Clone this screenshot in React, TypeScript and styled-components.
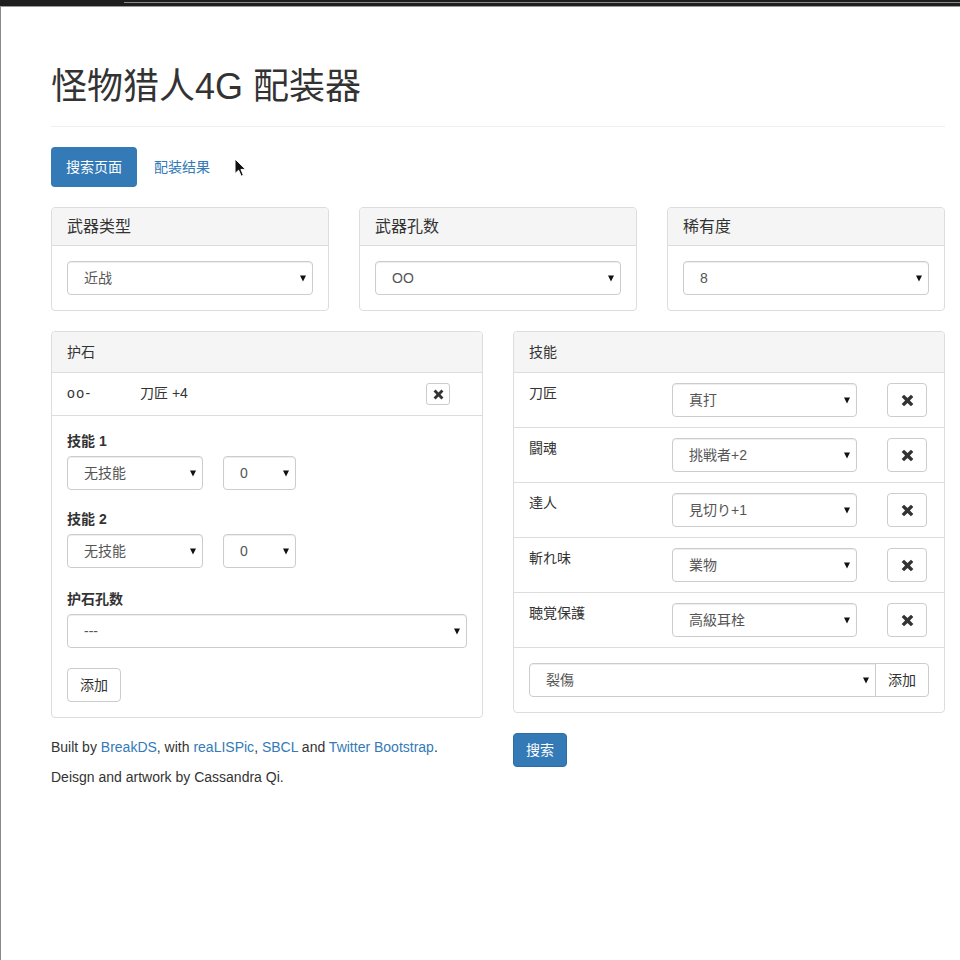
import React from 'react';
import styled, { createGlobalStyle } from 'styled-components';

const GlobalStyle = createGlobalStyle`
  html, body {
    margin: 0;
    padding: 0;
    background: #fff;
  }

  body {
    font-family: "Liberation Sans", "Noto Sans CJK SC", sans-serif;
    font-size: 14px;
    line-height: 1.42857;
    color: #333;
  }

  * {
    box-sizing: border-box;
  }
`;

const TopBar = styled.div`
  height: 7px;
  background: #1e1e1e;
  border-bottom: 1px solid #9a9a9a;
  padding-top: 2px;
`;

const TabLine = styled.div`
  margin-left: 124px;
  height: 1px;
  background: #8c8c8c;
`;

const Frame = styled.div`
  position: relative;
  min-height: 953px;
  border-left: 1px solid #8a8a8a;
`;

const Container = styled.div`
  width: 944px;
  padding: 0 0 40px 50px;
`;

const PageHeader = styled.div`
  padding: 60px 0 9px;
  margin-bottom: 20px;
  border-bottom: 1px solid #eee;
`;

const Title = styled.h1`
  margin: 0 0 10px;
  font-size: 36px;
  font-weight: 400;
  line-height: 40px;
  color: #333;
`;

const Pills = styled.ul`
  display: flex;
  gap: 2px;
  margin: 0 0 20px;
  padding: 0;
  list-style: none;
`;

const Pill = styled.a<{ $active?: boolean }>`
  display: block;
  padding: 10px 15px;
  line-height: 20px;
  border-radius: 4px;
  text-decoration: none;
  color: ${(p) => (p.$active ? '#fff' : '#337ab7')};
  background: ${(p) => (p.$active ? '#337ab7' : 'transparent')};
`;

const Row = styled.div<{ $cols: number }>`
  display: grid;
  grid-template-columns: repeat(${(p) => p.$cols}, 1fr);
  column-gap: 30px;
  align-items: start;
`;

const Col = styled.div`
  min-width: 0;
`;

const Panel = styled.div`
  margin-bottom: 20px;
  background: #fff;
  border: 1px solid #ddd;
  border-radius: 4px;
  overflow: hidden;
`;

const PanelHeading = styled.div<{ $large?: boolean }>`
  padding: 10px 15px;
  background: #f5f5f5;
  border-bottom: 1px solid #ddd;
  font-size: ${(p) => (p.$large ? '16px' : '14px')};
  line-height: ${(p) => (p.$large ? '17px' : '20px')};
  color: #333;
`;

const PanelBody = styled.div`
  padding: 15px;
`;

const ListItem = styled.div`
  padding: 10px 15px;
  border-bottom: 1px solid #ddd;
`;

const StoneRow = styled(ListItem)`
  display: flex;
  align-items: center;
  padding-right: 32px;
`;

const StoneCode = styled.span`
  width: 73px;
  letter-spacing: 1.5px;
`;

const StoneSkill = styled.span`
  flex: 1;
`;

const SkillRow = styled(ListItem)`
  display: grid;
  grid-template-columns: 113px 185px 40px;
  column-gap: 30px;
  align-items: start;
`;

const SkillName = styled.span`
  line-height: 20px;
`;

const FieldLabel = styled.label`
  display: block;
  margin-bottom: 5px;
  font-weight: 700;
  line-height: 20px;
`;

const FormGroup = styled.div<{ $gap: number }>`
  margin-bottom: ${(p) => p.$gap}px;
`;

const InlineSelects = styled.div`
  display: flex;
  gap: 20px;
`;

const SelectWrap = styled.div<{ $width?: number; $flat?: boolean }>`
  position: relative;
  width: ${(p) => (p.$width ? `${p.$width}px` : '100%')};
  flex: ${(p) => (p.$flat ? '1' : 'none')};
`;

const Select = styled.select<{ $flat?: boolean }>`
  appearance: none;
  -webkit-appearance: none;
  display: block;
  width: 100%;
  height: 34px;
  margin: 0;
  padding: 6px 22px 6px 16px;
  font-family: inherit;
  font-size: 14px;
  color: #555;
  background: #fff;
  border: 1px solid #ccc;
  border-radius: ${(p) => (p.$flat ? '4px 0 0 4px' : '4px')};
  box-shadow: inset 0 1px 1px rgba(0, 0, 0, 0.075);
`;

const Caret = styled.svg`
  position: absolute;
  right: 7px;
  top: 14px;
  pointer-events: none;
`;

const Button = styled.button<{ $primary?: boolean; $joined?: boolean }>`
  display: inline-flex;
  align-items: center;
  justify-content: center;
  height: 34px;
  padding: 6px 12px;
  font-family: inherit;
  font-size: 14px;
  line-height: 20px;
  color: ${(p) => (p.$primary ? '#fff' : '#333')};
  background: ${(p) => (p.$primary ? '#337ab7' : '#fff')};
  border: 1px solid ${(p) => (p.$primary ? '#2e6da4' : '#ccc')};
  border-radius: ${(p) => (p.$joined ? '0 4px 4px 0' : '4px')};
  margin-left: ${(p) => (p.$joined ? '-1px' : '0')};
  cursor: pointer;
`;

const IconButton = styled(Button)<{ $small?: boolean }>`
  width: ${(p) => (p.$small ? '24px' : '40px')};
  height: ${(p) => (p.$small ? '22px' : '34px')};
  padding: 0;
  border-radius: ${(p) => (p.$small ? '3px' : '4px')};
`;

const InputGroup = styled.div`
  display: flex;
`;

const Footer = styled.div`
  p {
    margin: 0 0 10px;
  }

  a {
    color: #337ab7;
    text-decoration: none;
  }
`;

const Pointer = styled.svg`
  position: absolute;
  left: 233px;
  top: 151px;
`;

const CaretIcon = () => (
  <Caret width="6" height="7" viewBox="0 0 6 7">
    <polygon points="0,0.5 6,0.5 3,6.5" fill="#111" />
  </Caret>
);

const RemoveIcon = ({ size }: { size: number }) => (
  <svg width={size} height={size} viewBox="0 0 12 12">
    <path
      d="M0.6 2.8 L2.8 0.6 L6 3.8 L9.2 0.6 L11.4 2.8 L8.2 6 L11.4 9.2 L9.2 11.4 L6 8.2 L2.8 11.4 L0.6 9.2 L3.8 6 Z"
      fill="#333"
    />
  </svg>
);

interface DropdownProps {
  value: string;
  width?: number;
  flat?: boolean;
}

const Dropdown: React.FC<DropdownProps> = ({ value, width, flat }) => (
  <SelectWrap $width={width} $flat={flat}>
    <Select $flat={flat} defaultValue={value}>
      <option value={value}>{value}</option>
    </Select>
    <CaretIcon />
  </SelectWrap>
);

const weaponPanels = [
  { title: '武器类型', value: '近战' },
  { title: '武器孔数', value: 'OO' },
  { title: '稀有度', value: '8' },
];

const skills = [
  { name: '刀匠', value: '真打' },
  { name: '闘魂', value: '挑戦者+2' },
  { name: '達人', value: '見切り+1' },
  { name: '斬れ味', value: '業物' },
  { name: '聴覚保護', value: '高級耳栓' },
];

const App: React.FC = () => (
  <>
    <GlobalStyle />
    <TopBar>
      <TabLine />
    </TopBar>
    <Frame>
      <Container>
        <PageHeader>
          <Title>怪物猎人4G 配装器</Title>
        </PageHeader>

        <Pills>
          <li>
            <Pill href="#" $active>
              搜索页面
            </Pill>
          </li>
          <li>
            <Pill href="#">配装结果</Pill>
          </li>
        </Pills>

        <Row $cols={3}>
          {weaponPanels.map((panel) => (
            <Panel key={panel.title}>
              <PanelHeading $large>{panel.title}</PanelHeading>
              <PanelBody>
                <Dropdown value={panel.value} />
              </PanelBody>
            </Panel>
          ))}
        </Row>

        <Row $cols={2}>
          <Col>
            <Panel>
              <PanelHeading>护石</PanelHeading>
              <StoneRow>
                <StoneCode>oo-</StoneCode>
                <StoneSkill>刀匠 +4</StoneSkill>
                <IconButton $small>
                  <RemoveIcon size={11} />
                </IconButton>
              </StoneRow>
              <PanelBody>
                <FormGroup $gap={19}>
                  <FieldLabel>技能 1</FieldLabel>
                  <InlineSelects>
                    <Dropdown value="无技能" width={136} />
                    <Dropdown value="0" width={73} />
                  </InlineSelects>
                </FormGroup>
                <FormGroup $gap={21}>
                  <FieldLabel>技能 2</FieldLabel>
                  <InlineSelects>
                    <Dropdown value="无技能" width={136} />
                    <Dropdown value="0" width={73} />
                  </InlineSelects>
                </FormGroup>
                <FormGroup $gap={20}>
                  <FieldLabel>护石孔数</FieldLabel>
                  <Dropdown value="---" />
                </FormGroup>
                <Button>添加</Button>
              </PanelBody>
            </Panel>

            <Footer>
              <p>
                Built by <a href="#">BreakDS</a>, with <a href="#">reaLISPic</a>,{' '}
                <a href="#">SBCL</a> and <a href="#">Twitter Bootstrap</a>.
              </p>
              <p>Deisgn and artwork by Cassandra Qi.</p>
            </Footer>
          </Col>

          <Col>
            <Panel>
              <PanelHeading>技能</PanelHeading>
              {skills.map((skill) => (
                <SkillRow key={skill.name}>
                  <SkillName>{skill.name}</SkillName>
                  <Dropdown value={skill.value} />
                  <IconButton>
                    <RemoveIcon size={13} />
                  </IconButton>
                </SkillRow>
              ))}
              <PanelBody>
                <InputGroup>
                  <Dropdown value="裂傷" flat />
                  <Button $joined>添加</Button>
                </InputGroup>
              </PanelBody>
            </Panel>
            <Button $primary>搜索</Button>
          </Col>
        </Row>
      </Container>

      <Pointer width="13" height="20" viewBox="0 0 13 20">
        <path
          d="M1 1 L1 15.5 L4.6 12.2 L7.2 18.2 L9.4 17.2 L6.9 11.4 L11.6 11.4 Z"
          fill="#111"
          stroke="#fff"
          strokeWidth="1"
          strokeLinejoin="round"
        />
      </Pointer>
    </Frame>
  </>
);

export default App;
